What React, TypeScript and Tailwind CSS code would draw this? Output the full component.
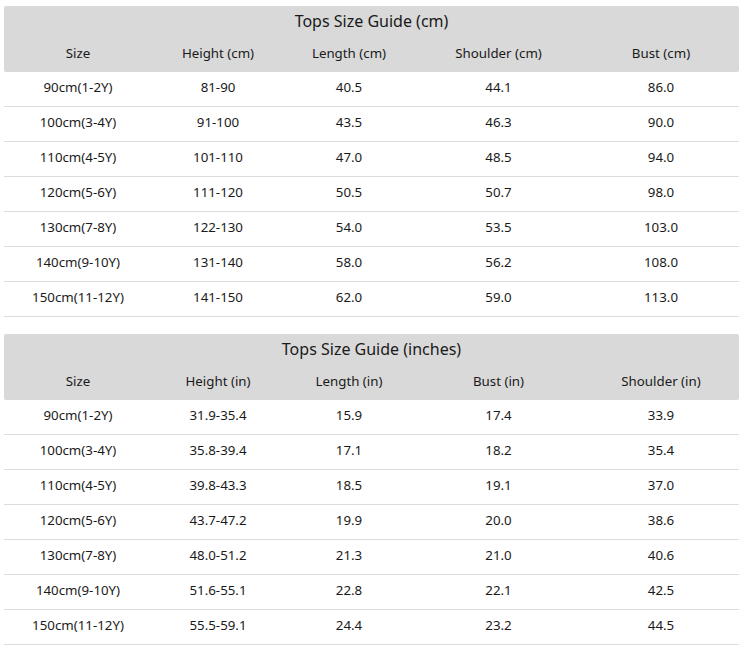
import React from "react";

const cols = ["w-[148px]", "w-[132px]", "w-[130px]", "w-[169px]", "w-[156px]"];

type T = { title: string; head: string[]; rows: string[][] };

const tables: T[] = [
  {
    title: "Tops Size Guide (cm)",
    head: ["Size", "Height (cm)", "Length (cm)", "Shoulder (cm)", "Bust (cm)"],
    rows: [
      ["90cm(1-2Y)", "81-90", "40.5", "44.1", "86.0"],
      ["100cm(3-4Y)", "91-100", "43.5", "46.3", "90.0"],
      ["110cm(4-5Y)", "101-110", "47.0", "48.5", "94.0"],
      ["120cm(5-6Y)", "111-120", "50.5", "50.7", "98.0"],
      ["130cm(7-8Y)", "122-130", "54.0", "53.5", "103.0"],
      ["140cm(9-10Y)", "131-140", "58.0", "56.2", "108.0"],
      ["150cm(11-12Y)", "141-150", "62.0", "59.0", "113.0"],
    ],
  },
  {
    title: "Tops Size Guide (inches)",
    head: ["Size", "Height (in)", "Length (in)", "Bust (in)", "Shoulder (in)"],
    rows: [
      ["90cm(1-2Y)", "31.9-35.4", "15.9", "17.4", "33.9"],
      ["100cm(3-4Y)", "35.8-39.4", "17.1", "18.2", "35.4"],
      ["110cm(4-5Y)", "39.8-43.3", "18.5", "19.1", "37.0"],
      ["120cm(5-6Y)", "43.7-47.2", "19.9", "20.0", "38.6"],
      ["130cm(7-8Y)", "48.0-51.2", "21.3", "21.0", "40.6"],
      ["140cm(9-10Y)", "51.6-55.1", "22.8", "22.1", "42.5"],
      ["150cm(11-12Y)", "55.5-59.1", "24.4", "23.2", "44.5"],
    ],
  },
];

function Table({ t }: { t: T }) {
  return (
    <div className="w-[735px]">
      <div className="bg-[#d9d9d9] rounded-[2px]">
        <div className="h-[28px] flex items-center justify-center text-[16px] pt-[1px]">{t.title}</div>
        <div className="h-[38px] flex items-center pt-[2px]">
          {t.head.map((h, i) => (
            <div key={i} className={`${cols[i]} text-center`}>
              {h}
            </div>
          ))}
        </div>
      </div>
      {t.rows.map((r, ri) => (
        <div key={ri} className="h-[35px] flex items-center pb-[2px] border-b border-[#dcdcdc]">
          {r.map((c, i) => (
            <div key={i} className={`${cols[i]} text-center`}>
              {c}
            </div>
          ))}
        </div>
      ))}
    </div>
  );
}

export default function App() {
  return (
    <div
      className="w-[750px] h-[653px] bg-white pl-[4px] pt-[6px] flex flex-col gap-[17px] text-[13.3px] text-[#1a1a1a]"
      style={{ fontFamily: '"Noto Sans", "Open Sans", sans-serif' }}
    >
      {tables.map((t, i) => (
        <Table key={i} t={t} />
      ))}
    </div>
  );
}
